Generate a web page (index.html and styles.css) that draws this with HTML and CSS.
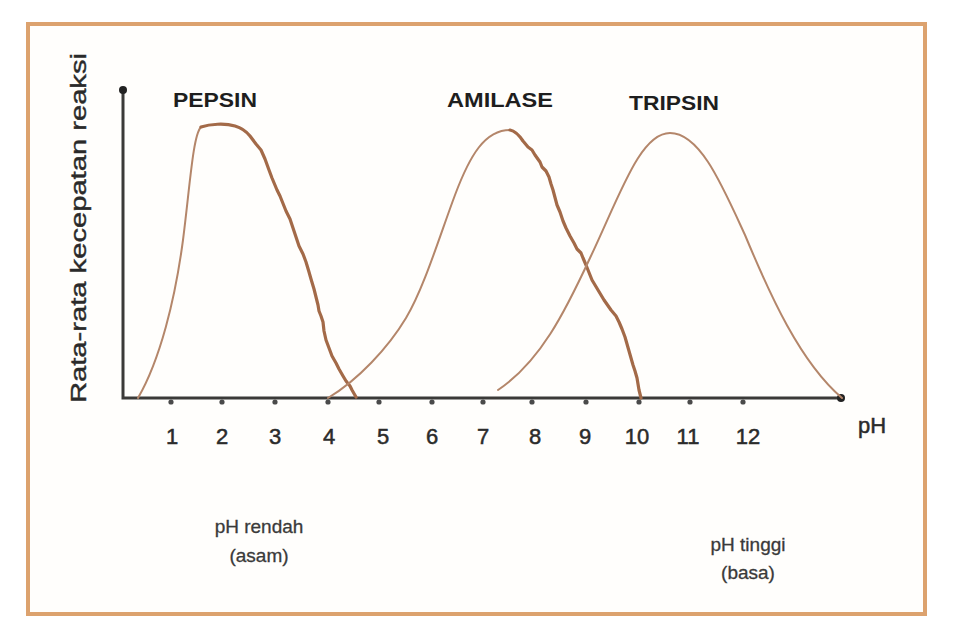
FILE: index.html
```html
<!DOCTYPE html>
<html lang="id">
<head>
<meta charset="utf-8">
<title>Pengaruh pH terhadap enzim</title>
<link rel="stylesheet" href="styles.css">
</head>
<body>
<div class="frame">
  <svg class="chart" viewBox="30 26 893 586" width="893" height="586" xmlns="http://www.w3.org/2000/svg">
    <!-- axes -->
    <polyline class="axis" points="123,90 123,398 841,398"/>
    <circle cx="123" cy="90" r="4" class="dot"/>
    <circle cx="841" cy="398" r="4" class="dot"/>
    <g class="ticks">
      <circle cx="171" cy="402" r="2.6"/><circle cx="222" cy="402" r="2.6"/>
      <circle cx="275" cy="402" r="2.6"/><circle cx="328" cy="402" r="2.6"/>
      <circle cx="379" cy="402" r="2.6"/><circle cx="432" cy="402" r="2.6"/>
      <circle cx="483" cy="402" r="2.6"/><circle cx="532" cy="402" r="2.6"/>
      <circle cx="586" cy="402" r="2.6"/><circle cx="639" cy="402" r="2.6"/>
      <circle cx="690" cy="402" r="2.6"/><circle cx="743" cy="402" r="2.6"/>
    </g>

    <!-- pepsin -->
    <path class="thin" d="M138,398 C160,360 175,300 183,240 C190,185 193,135 201,127"/>
    <path class="thick" d="M201,127 C210,124 225,123 235,126 C242,128 246,131 250,136 L256,144 L261,150 L265,159 L269,170 L272,178 L277,190 L280,196 L286,211 L290,219 L293,228 L297,240 L299,246 L303,254 L306,262 L309,272 L311,279 L314,289 L316,297 L318,305 L319,311 L321,316 L323,322 L324,331 L326,340 L329,348 L332,356 L336,363 L339,369 L343,376 L346,381 L350,386 L352,390 L356,397"/>

    <!-- amilase -->
    <path class="thin" d="M328,398 C358,380 388,348 406,318 C424,288 440,235 455,195 C470,155 485,130 510,130"/>
    <path class="thick" d="M510,130 C515,131 519,135 523,141 L528,147 L532,150 L535,155 L540,162 L542,167 L546,171 L549,177 L551,184 L553,190 L557,205 L560,212 L563,221 L566,228 L570,236 L574,243 L577,249 L581,253 L583,258 L586,265 L588,270 L592,280 L598,290 L604,300 L611,310 L616,316 L619,322 L622,329 L625,337 L627,344 L629,351 L633,365 L635,371 L637,378 L639,390 L641,398"/>

    <!-- tripsin -->
    <path class="thin" d="M498,390 C540,362 565,312 590,258 C620,195 640,133 670,133 C700,133 722,185 745,235 C770,295 800,362 842,398"/>

    <!-- enzyme labels -->
    <text class="enz" x="173" y="107" textLength="84" lengthAdjust="spacingAndGlyphs">PEPSIN</text>
    <text class="enz" x="447" y="107" textLength="106" lengthAdjust="spacingAndGlyphs">AMILASE</text>
    <text class="enz" x="629" y="110" textLength="90" lengthAdjust="spacingAndGlyphs">TRIPSIN</text>

    <!-- y axis label -->
    <text class="ylabel" transform="translate(86,228) rotate(-90)" x="0" y="0" text-anchor="middle" textLength="350" lengthAdjust="spacingAndGlyphs">Rata-rata kecepatan reaksi</text>

    <!-- tick labels -->
    <g class="num" text-anchor="middle">
      <text x="172" y="444">1</text><text x="222" y="444">2</text>
      <text x="275" y="444">3</text><text x="329" y="444">4</text>
      <text x="383" y="444">5</text><text x="432" y="444">6</text>
      <text x="483" y="444">7</text><text x="535" y="444">8</text>
      <text x="585" y="444">9</text><text x="637" y="444">10</text>
      <text x="688" y="444">11</text><text x="748" y="444">12</text>
    </g>
    <text class="num" x="858" y="433">pH</text>

    <g class="note" text-anchor="middle">
      <text x="259" y="533">pH rendah</text>
      <text x="259" y="562">(asam)</text>
      <text x="748" y="551">pH tinggi</text>
      <text x="748" y="579">(basa)</text>
    </g>
  </svg>
</div>
</body>
</html>
```

FILE: styles.css
```css
html, body {
  margin: 0;
  padding: 0;
  background: #ffffff;
}

body {
  width: 953px;
  height: 639px;
  overflow: hidden;
  font-family: "Liberation Sans", Arial, sans-serif;
}

.frame {
  box-sizing: border-box;
  width: 901px;
  height: 594px;
  margin: 22px 0 0 26px;
  border: 4px solid #dca26e;
  background: #fffefc;
}

.chart {
  display: block;
}

.axis {
  fill: none;
  stroke: #3b3a38;
  stroke-width: 3;
  stroke-linejoin: miter;
}

.dot {
  fill: #222222;
}

.ticks circle {
  fill: #4a4a4a;
}

.thin {
  fill: none;
  stroke: #b4866a;
  stroke-width: 2;
  stroke-linecap: round;
}

.thick {
  fill: none;
  stroke: #a36a48;
  stroke-width: 3.2;
  stroke-linecap: round;
  stroke-linejoin: round;
}

.enz {
  font-family: "Liberation Sans", Arial, sans-serif;
  font-weight: bold;
  font-size: 21px;
  fill: #1e1e1e;
}

.ylabel {
  font-family: "Liberation Sans", Arial, sans-serif;
  font-size: 22px;
  fill: #2a2a2a;
  stroke: #2a2a2a;
  stroke-width: 0.4;
}

.num {
  font-family: "Liberation Sans", Arial, sans-serif;
  font-size: 22px;
  fill: #2b2b2b;
  stroke: #2b2b2b;
  stroke-width: 0.5;
}

.note {
  font-family: "Liberation Sans", Arial, sans-serif;
  font-size: 19px;
  fill: #3a3a3a;
  stroke: #3a3a3a;
  stroke-width: 0.3;
}
```
